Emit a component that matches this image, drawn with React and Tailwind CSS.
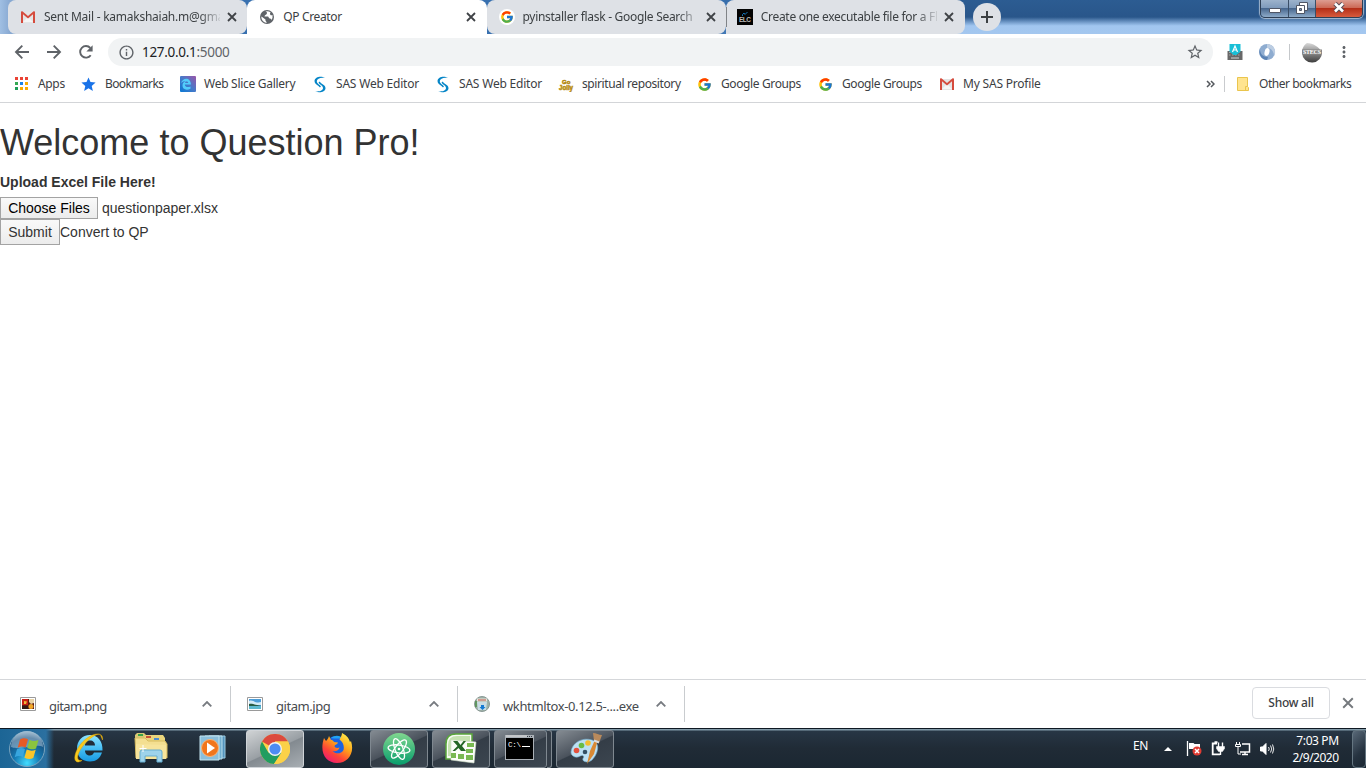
import React from "react";
import { FcGoogle } from "react-icons/fc";
import {
  MdInfoOutline,
  MdStarBorder,
  MdStar,
  MdMoreVert,
} from "react-icons/md";

const Back = ({ className = "" }) => (
  <svg width="20" height="20" viewBox="0 0 20 20" fill="none" stroke="#5f6368" strokeWidth="1.900" className={className}>
    <path d="M17 10H4.500M10.300 3.700L4 10l6.300 6.300" />
  </svg>
);

const Reload = () => (
  <svg width="20" height="20" viewBox="0 0 20 20" className="ml-3">
    <path d="M14.700 13.200A5.800 5.800 0 1 1 14.300 6" fill="none" stroke="#5f6368" strokeWidth="1.900" />
    <path d="M16.600 3.200v6.200h-6.200z" fill="#5f6368" />
  </svg>
);

const Gmail = () => (
  <svg width="16" height="16" viewBox="0 0 16 16">
    <path d="M2 3h12v11H2z" fill="#e4e4e4" />
    <path d="M3 13l5-5 5 5z" fill="#f5f5f5" />
    <path d="M1 3.200C1 2.400 2 2 2.700 2.600L8 7l5.300-4.400C14 2 15 2.400 15 3.200V14h-2V5.300L8 9.500 3 5.300V14H1z" fill="#d54b3d" />
  </svg>
);

const Globe = () => (
  <svg width="16" height="16" viewBox="0 0 16 16">
    <circle cx="8" cy="8" r="7" fill="#5f6368" />
    <path d="M6.500 2.500C8 3 8.500 4 7.500 5.200 6.500 6 5.500 6 5.500 7.500H9c1 .5.500 2 2 2 1.200 0 1.500 1 1 2a5.700 5.700 0 0 0 1.500-5.500c-1.500.8-2.500 0-2.500-1.200 0-.8.500-1 .5-1.500A6 6 0 0 0 6.500 2.500z" fill="#fff" />
    <path d="M2.500 7.500l4 3v1.200l1 1.300v1A6 6 0 0 1 2.300 8z" fill="#fff" />
  </svg>
);

const Close = ({ size = 10, color = "#3f4246", w = 1.8 }) => (
  <svg width={size} height={size} viewBox="0 0 10 10" className="shrink-0">
    <path d="M1 1l8 8M9 1L1 9" stroke={color} strokeWidth={w} />
  </svg>
);

const Elc = () => (
  <svg width="16" height="16" viewBox="0 0 16 16">
    <path d="M0 0h16v16H0z" fill="#030303" />
    <path d="M5.500 7V5.500L7 4l1 1.500L10.500 3" stroke="#1573b4" fill="none" />
    <text x="2" y="13" fontSize="6.500" fontWeight="bold" fill="#bcbcbc" fontFamily="Liberation Sans, sans-serif" textLength="12">ELC</text>
  </svg>
);

const Apps = () => (
  <svg width="14" height="14" viewBox="0 0 14 14">
    {["#ea4335", "#ea4335", "#ea4335", "#34a853", "#1a83e8", "#f9ab00", "#1e9d57", "#f9ab00", "#f9ab00"].map((c, i) => (
      <rect key={i} x={1 + (i % 3) * 5} y={Math.floor(i / 3) * 5} width="3" height="3" fill={c} />
    ))}
  </svg>
);

const EdgeE = () => (
  <svg width="16" height="16" viewBox="0 0 16 16">
    <defs>
      <linearGradient id="edge" x1="0" y1="1" x2="1" y2="0">
        <stop offset="0" stopColor="#0878d4" />
        <stop offset=".5" stopColor="#477ac9" />
        <stop offset="1" stopColor="#9a55a8" />
      </linearGradient>
    </defs>
    <rect width="16" height="16" rx="1" fill="url(#edge)" />
    <path d="M1 7C2.500 1.500 10.500.5 11 8.500H4.800c.3 3 3.700 3 5.700 2v2.200C6 15 2.200 13 2.500 9 2.700 6.500 5 5 7 5 4.500 4.600 2.500 5.500 1 7zM5 7h3.200C8.200 5 5.500 5 5 7z" fill="#53cdfb" />
  </svg>
);

const Sas = () => (
  <svg width="16" height="17" viewBox="0 0 16 17" fill="#0585c7">
    <path d="M13 2C9.500-.3 3 .5 2.500 5c0 2.800 2.300 3.800 4 5l1.500 1.500 1-1.200C7.500 8.500 4.800 7.500 4.800 5 5 2.500 9 1 13 2z" />
    <path d="M3 15.200c3.500 2 10.300 1.300 10.500-3 0-2.800-2.500-3.700-4.300-5L7.500 5.500l-1 1.200c1.500 2 4.500 2.800 4.500 5.300 0 2.600-4 4-8 3.200z" />
  </svg>
);

const Jolly = () => (
  <svg width="16" height="16" viewBox="0 0 16 16" fontFamily="Liberation Sans, sans-serif" fontWeight="bold" fill="#d9a916" stroke="#b38a1c" strokeWidth=".6">
    <text x="4" y="8" fontSize="6">Go</text>
    <text x="1" y="13.500" fontSize="6.500" textLength="14" lengthAdjust="spacingAndGlyphs">Jolly</text>
  </svg>
);

const Folder = () => (
  <svg width="14" height="16" viewBox="0 0 14 16">
    <path d="M1.500 1.500h10v9l1 1v3h-11z" fill="#ffe48f" stroke="#eac54d" />
    <path d="M9.500 14v-3.500h2" fill="none" stroke="#eac54d" />
  </svg>
);

const InputTool = () => (
  <svg width="18" height="18" viewBox="0 0 18 18">
    <path d="M1.500 8h15v9h-15z" fill="#686868" />
    <path d="M3 9.500h12M3 12h12" stroke="#a5a5a5" strokeDasharray="1.500 1.500" />
    <path d="M5 15h8" stroke="#d5d5d5" />
    <path d="M3.500 1h11v7.500L10.500 12h-3l-4-3.500z" fill="#19bfd7" />
    <path d="M6.500 9L9 3l2.500 6M7.500 7h3" stroke="#fff" fill="none" strokeWidth="1.200" />
  </svg>
);

const Swirl = () => (
  <svg width="18" height="18" viewBox="0 0 18 18">
    <circle cx="9" cy="9" r="8" fill="#8eacd0" />
    <path d="M9 1a8 8 0 0 1 7 12C16 8 13 5 9 5z" fill="#bccde2" />
    <path d="M2 6c0 5 3 8 8 8l-1 3A8 8 0 0 1 2 6z" fill="#5b83b4" />
    <ellipse cx="9" cy="9" rx="2.400" ry="4" fill="#fff" transform="rotate(15 9 9)" />
  </svg>
);

const Avatar = () => (
  <svg width="22" height="22" viewBox="0 0 22 22">
    <defs>
      <linearGradient id="ava" x1="0" y1="0" x2="0" y2="1">
        <stop offset="0" stopColor="#d8d8d8" />
        <stop offset=".5" stopColor="#8a8a8a" />
        <stop offset="1" stopColor="#3d3d3d" />
      </linearGradient>
    </defs>
    <path d="M6 2c6 0 12 4 15 9a10 10 0 0 1-20 1C1 7 3 4 6 2z" fill="url(#ava)" />
    <path d="M1 8.500h20v5H1z" fill="#858585" />
    <text x="2" y="13" fontSize="6" fontWeight="bold" fill="#fff" textLength="18" fontFamily="Liberation Serif, serif">STECS</text>
  </svg>
);

const tabs = [
  { icon: <Gmail />, text: "Sent Mail - kamakshaiah.m@gmail.com", track: "tracking-[-0.25px]" },
  { icon: <Globe />, text: "QP Creator", active: true, track: "tracking-[-0.35px]" },
  {
    icon: (
      <span className="flex h-4 w-4 items-center justify-center rounded-full bg-white">
        <FcGoogle size={14} />
      </span>
    ),
    text: "pyinstaller flask - Google Search",
    track: "tracking-[-0.29px]",
  },
  { icon: <Elc />, text: "Create one executable file for a Flask", track: "tracking-[-0.3px]", sep: true },
];

function Tab({ tab }) {
  const mask = tab.active ? "" : "[mask-image:linear-gradient(to_right,black_155px,transparent_179px)]";
  return (
    <div className={"relative flex h-[34px] w-[239.25px] shrink-0 items-center " + (tab.active ? "rounded-t-lg bg-white pl-3" : tab.sep ? "rounded-t-lg rounded-br-lg bg-[#dee1e6] pl-[11px]" : "rounded-lg bg-[#dee1e6] pl-3")}>
      {tab.sep && <span className="absolute left-0 top-[7px] h-5 w-px bg-[#808387]" />}
      <span className="flex w-6 shrink-0 items-center">{tab.icon}</span>
      <span className={"w-[176px] overflow-hidden whitespace-nowrap text-[12px] leading-4 text-[#3c4043] " + tab.track + " " + mask}>{tab.text}</span>
      <span className="ml-[7px] flex">
        <Close />
      </span>
    </div>
  );
}

function WindowButtons() {
  return (
    <div className="mr-[3px] flex h-[18px] overflow-hidden rounded-b-[5px] border border-t-0 border-[#2e3f55] shadow-[0_0_1px_1px_rgba(255,255,255,0.55)]">
      <div className="flex w-[28px] items-end justify-center border-r border-[#3b4f67] bg-[linear-gradient(#9db3cc,#7e9abb_48%,#48678e_50%,#8eabc9)] pb-1">
        <span className="h-[5px] w-3 rounded-[1px] border border-[#505665] bg-white" />
      </div>
      <div className="flex w-[27px] items-center justify-center border-r border-[#3b4f67] bg-[linear-gradient(#9db3cc,#7e9abb_48%,#48678e_50%,#8eabc9)] pb-0.5">
        <svg width="12" height="12" viewBox="0 0 12 12">
          <path d="M3.500.5h8v8h-8z" fill="#fff" stroke="#505665" />
          <path d="M.5 3.500h8v8h-8z" fill="#fff" stroke="#505665" />
          <path d="M3.500 6.500h2v2h-2z" fill="#7e9abb" stroke="#505665" />
        </svg>
      </div>
      <div className="flex w-[46px] items-center justify-center bg-[linear-gradient(#dd9d91,#cc6955_46%,#b42f18_50%,#d75b3d)] pb-0.5">
        <svg width="12" height="11" viewBox="0 0 12 11">
          <path d="M2 1.500l8 8M10 1.500l-8 8" stroke="#574b55" strokeWidth="4.600" />
          <path d="M2 1.500l8 8M10 1.500l-8 8" stroke="#fff" strokeWidth="2.600" />
        </svg>
      </div>
    </div>
  );
}

const bookmarks = [
  { icon: <Apps />, text: "Apps", w: "w-[67px]", t: "tracking-[-0.35px]" },
  { icon: <MdStar size={17} color="#1a73e8" className="-ml-px" />, text: "Bookmarks", w: "w-[99px]", t: "tracking-[-0.6px]" },
  { icon: <EdgeE />, text: "Web Slice Gallery", w: "w-[132px]", t: "tracking-[-0.28px]" },
  { icon: <Sas />, text: "SAS Web Editor", w: "w-[123px]", t: "tracking-[-0.2px]" },
  { icon: <Sas />, text: "SAS Web Editor", w: "w-[123px]", t: "tracking-[-0.2px]" },
  { icon: <Jolly />, text: "spiritual repository", w: "w-[139px]", t: "tracking-[-0.4px]" },
  { icon: <FcGoogle size={15} />, text: "Google Groups", w: "w-[121px]", t: "tracking-[-0.38px]" },
  { icon: <FcGoogle size={15} />, text: "Google Groups", w: "w-[121px]", t: "tracking-[-0.38px]" },
  { icon: <Gmail />, text: "My SAS Profile", w: "w-[130px]", t: "tracking-[-0.2px]" },
];

const ImgPng = () => (
  <svg width="16" height="14" viewBox="0 0 16 14">
    <path d="M.5.5h15v13H.5z" fill="#fff" stroke="#9a9a9a" />
    <path d="M2 2h12v10H2z" fill="#5c1a14" />
    <path d="M2 2h6v6H2z" fill="#c91d13" />
    <path d="M9 2h5v4l-3 1-2-2z" fill="#e8d2a4" />
    <circle cx="11" cy="9.500" r="2.500" fill="#f0a72a" />
    <path d="M2 9h6v3H2z" fill="#321817" />
    <path d="M4 4l3 .5L6 7H4z" fill="#ecb73b" />
  </svg>
);

const ImgJpg = () => (
  <svg width="16" height="14" viewBox="0 0 16 14">
    <path d="M.5.5h15v13H.5z" fill="#fff" stroke="#9a9a9a" />
    <path d="M2 2h12v10H2z" fill="#4c9ed8" />
    <path d="M2 4c4-2 6 3 12 1v3H2z" fill="#d3ebf8" />
    <path d="M2 7c3-1 6 1 12 2H2z" fill="#285c43" />
    <path d="M2 9h12v3H2z" fill="#5db9cf" />
  </svg>
);

const Installer = () => (
  <svg width="16" height="16" viewBox="0 0 16 16">
    <circle cx="8" cy="8" r="7.500" fill="#9eb2a8" stroke="#8a9995" />
    <path d="M3 2.500h10v3H3z" fill="#e7e5dc" />
    <path d="M4 4h8" stroke="#b65143" />
    <path d="M3 6h10l-1 8H4z" fill="#c8dce4" />
    <path d="M7 9h3v2h1.500l-3 3-3-3H7z" fill="#1679d2" />
    <path d="M2 5v6" stroke="#4e8d48" strokeWidth="1.500" />
  </svg>
);

const Chevron = () => (
  <svg width="10" height="6" viewBox="0 0 10 6">
    <path d="M.7 5.300L5 1l4.300 4.300" fill="none" stroke="#777b80" strokeWidth="1.800" />
  </svg>
);

function Download({ icon, text, pad, track, width }) {
  return (
    <div className={"flex h-9 items-center border-r border-[#c9cccf] " + width + " " + pad}>
      <span className="mb-px w-[29px] shrink-0">{icon}</span>
      <span className={"mt-1 flex-1 whitespace-nowrap text-[13px] leading-5 text-[#474b4f] " + track}>{text}</span>
      <span className="mr-[18px]">
        <Chevron />
      </span>
    </div>
  );
}

const StartOrb = () => (
  <svg width="38" height="38" viewBox="0 0 38 38">
    <defs>
      <radialGradient id="orb" cx=".5" cy=".9" r=".9">
        <stop offset="0" stopColor="#42dcff" />
        <stop offset=".4" stopColor="#167db6" />
        <stop offset=".8" stopColor="#174e7c" />
        <stop offset="1" stopColor="#88a8bf" />
      </radialGradient>
    </defs>
    <circle cx="19" cy="19" r="17.500" fill="url(#orb)" stroke="#79a4bf" />
    <path d="M3 17a16 16 0 0 1 32 0c-9-4-22 4-32 0z" fill="#c9dce8" opacity=".45" />
    <path d="M12 9.500c3-2 5.500-1.500 8-.3l-2.300 8.300c-3-1.400-5.200-1.200-8 .2z" fill="#e75b25" />
    <path d="M21.500 9.800c3 1.500 5.500 1.600 9 .2L28 18.500c-3 1.400-5.500 1-8.800-.4z" fill="#8bc43f" />
    <path d="M9 19.200c3-1.500 5.500-1.400 8-.3l-2.200 8c-3-1.300-5.200-1.200-8.100.3z" fill="#38a6de" />
    <path d="M18.700 19.500c3 1.400 5.800 1.600 9 .3l-2.400 8.200c-3 1.500-5.500 1.300-8.900-.2z" fill="#fac52a" />
  </svg>
);

const IE = () => (
  <svg width="32" height="32" viewBox="0 0 32 32">
    <defs>
      <linearGradient id="ie" x1="0" y1="0" x2="0" y2="1">
        <stop offset="0" stopColor="#8fe4ff" />
        <stop offset=".5" stopColor="#48c0f6" />
        <stop offset="1" stopColor="#1799e2" />
      </linearGradient>
    </defs>
    <path fillRule="evenodd" d="M17 3C9 3 4 9 4 16.500c0 8 5 13 13 13 6 0 10-3 12-9h-8c-1 2-2 3-4 3-3 0-5-2-5-5h17.500C30 9.500 25 3 17 3zM12 13.500c0-3 2-5 5-5s5 2 5 5z" fill="url(#ie)" />
    <path d="M29.500 8C31-2 16 1 7 13-.5 23 0 34 9 28.500 3 29.500 3 23 10 14 17 5 27-1 28 4z" fill="#f8c91d" stroke="#e1a608" strokeWidth=".5" />
  </svg>
);

const Explorer = () => (
  <svg width="34" height="32" viewBox="0 0 34 32">
    <path d="M1 3l2-2h7l2 2v5H1z" fill="#d9c875" />
    <path d="M10 5l2-2h17l2 3v8H10z" fill="#ead57c" />
    <path d="M4 2h5v2H4z" fill="#38a347" />
    <path d="M12 4h5v2h-5z" fill="#c95438" />
    <path d="M20 6h5v2h-5z" fill="#4f8dd0" />
    <path d="M1 6h10l3 3h17l2 3v14H2z" fill="#f4df91" stroke="#d8bc61" />
    <path d="M2 12l30 1v14H2z" fill="#f7e49c" />
    <path d="M6 30V20q0-2 2-2h18q2 0 2 2v10h-5v-6H11v6z" fill="#9ed3eb" stroke="#66add0" />
    <path d="M9 13v7M5.500 16.500h7" stroke="#fff" strokeWidth="1" />
  </svg>
);

const Player = () => (
  <svg width="28" height="28" viewBox="0 0 28 28">
    <path d="M10 2h16v22H10z" fill="#5494bd" stroke="#9acbe2" />
    <path d="M6 2h17v23H6z" fill="#72afd0" stroke="#b9deed" />
    <path d="M1 2h19v24H1z" fill="#8bbfdc" stroke="#c4e5f1" />
    <circle cx="11" cy="14" r="8.500" fill="#f1761d" stroke="#f8b579" />
    <path d="M8 8.500v11l8-5.500z" fill="#fff" />
  </svg>
);

const Chrome = () => (
  <svg width="30" height="30" viewBox="0 0 30 30">
    <circle cx="15" cy="15" r="15" fill="#fbd148" />
    <path d="M15 15L2 7.500A15 15 0 0 1 28 7.500H15z" fill="#dc4a3e" />
    <path d="M2 7.500A15 15 0 0 0 14 30l7.500-11-6.500-4L8.500 18.700z" fill="#229d60" />
    <path d="M15 7.500h13A15 15 0 0 1 14 30l7.500-11.500z" fill="#fbd148" />
    <circle cx="15" cy="15" r="7" fill="#f2f3f2" />
    <circle cx="15" cy="15" r="5.600" fill="#4d8cf3" />
  </svg>
);

const Firefox = () => (
  <svg width="32" height="32" viewBox="0 0 32 32">
    <defs>
      <linearGradient id="ff" x1=".85" y1="0" x2=".2" y2="1">
        <stop offset="0" stopColor="#fff24d" />
        <stop offset=".4" stopColor="#ffa31a" />
        <stop offset=".7" stopColor="#ff4536" />
        <stop offset="1" stopColor="#ec1679" />
      </linearGradient>
    </defs>
    <circle cx="15" cy="13.500" r="10.500" fill="#1e63e0" />
    <path d="M10 5c4-3 9-3 12 1-4-1-8 0-12-1z" fill="#21a4f4" />
    <path d="M3 5l2 3c1-1 2-2 3-5l2 4c1.500 0 2 .5 3 2l4 .5c-.5 2-3 2-3.500 3.500 0 2 3 2.500 5 1.500-.5 3-4 4.500-7 3.500 3 3.500 9 3 11-1 1-4-.5-8-4-10.500C20 4 21 2 21 0c6 3 7 6 8 9l1-1c4 12-3 22-14 22S-2 20 3 5z" fill="url(#ff)" />
  </svg>
);

const Atom = () => (
  <svg width="32" height="32" viewBox="0 0 32 32">
    <defs>
      <linearGradient id="atom" x1="0" y1="0" x2="0" y2="1">
        <stop offset="0" stopColor="#80d78f" />
        <stop offset="1" stopColor="#079d6c" />
      </linearGradient>
    </defs>
    <circle cx="16" cy="16" r="16" fill="url(#atom)" />
    <g fill="none" stroke="#fff" strokeWidth="1.300">
      <ellipse cx="16" cy="16" rx="4" ry="11" transform="rotate(-22 16 16)" />
      <ellipse cx="16" cy="16" rx="4" ry="11" transform="rotate(38 16 16)" />
      <ellipse cx="16" cy="16" rx="4" ry="11" transform="rotate(98 16 16)" />
    </g>
    <circle cx="16" cy="16" r="1.300" fill="#fff" />
  </svg>
);

const Excel = () => (
  <svg width="32" height="32" viewBox="0 0 32 32">
    <path d="M1 26V11Q1 1 11 1h16v25z" fill="#f6fbf2" stroke="#59a63b" strokeWidth="1.500" />
    <path d="M3 23V12Q3 3 12 3h13v20z" fill="#c5e2b0" />
    <path d="M6 7l25 2-2 21-23-3z" fill="#fbfdf9" stroke="#cfdec8" strokeWidth=".6" />
    <path d="M22 10h7v4h-7zM21 16h7v4h-7zM21 22h7v5h-7zM13 21h6v5h-6zM6 20h5v5H6z" fill="#79b952" />
    <path d="M8 8h4.500l3 4 3-4H21l-4 5 4 5h-5l-2.500-3-3.500 3H7.500l5-5z" fill="#246626" />
  </svg>
);

const Terminal = () => (
  <svg width="29" height="25" viewBox="0 0 29 25" className="mb-0.5 mr-[3px]">
    <path d="M0 0h29v25H0z" fill="#aab0b6" />
    <path d="M1 1h21" stroke="#ddd" />
    <path d="M22 1.500h5" stroke="#303841" strokeDasharray="1 1" />
    <path d="M1 3h27v21H1z" />
    <text x="3" y="12" fill="#fff" fontSize="7.500" fontFamily="Liberation Mono, monospace" textLength="13">C:\</text>
    <path d="M17 11.500h8" stroke="#fff" />
  </svg>
);

const Paint = () => (
  <svg width="33" height="33" viewBox="0 0 33 33">
    <path d="M2 20C3 10 14 5 23 8c9 3 6 14 0 20-5 4-12 1-8-3-2-4-4 1-9 0-3-1-4-3-4-5z" fill="#bde0f3" stroke="#76b4d3" strokeWidth=".6" />
    <circle cx="16" cy="20" r="2.300" fill="#345064" />
    <circle cx="7.500" cy="18.500" r="2.800" fill="#e3513d" />
    <circle cx="12.500" cy="13.500" r="2.800" fill="#69bc45" />
    <circle cx="19" cy="11" r="2.800" fill="#f4bd31" />
    <path d="M28.500 9L25 22l-7 10 3-13 5-11z" fill="#d98934" />
    <path d="M24 1c3 0 6 2 9 2l-3 8-5-2z" fill="#b98a5c" />
    <path d="M25 8.500l5 2" stroke="#d8dce0" strokeWidth="2" />
  </svg>
);

function TaskButton({ children, active, w = "w-[58px]" }) {
  return (
    <div className={"flex h-[38px] shrink-0 items-center justify-center rounded-[3px] border " + w + " " + (active ? "border-[#d0d4d8] bg-[linear-gradient(155deg,#d0d3d5,#999fa4_50%,#838a90_52%,#a8aeb3)]" : "border-[#7f8890] bg-[linear-gradient(155deg,#848b92,#4a525c_48%,#343d47_50%,#3c4650)]")}>
      {children}
    </div>
  );
}

function Taskbar() {
  return (
    <footer className="flex h-10 shrink-0 border-t border-[#0e1822] bg-[linear-gradient(#829ba9_0px,#829ba9_1px,#273645_2px,#202b36_50%,#1b2732)] text-white">
      <div className="flex h-full w-[54px] shrink-0 items-center bg-[linear-gradient(90deg,#1c6595,#2b70a0_85%,transparent)] pl-2">
        <StartOrb />
      </div>
      <div className="flex h-full w-[192px] shrink-0 items-center pb-px pl-[19px]">
        <IE />
        <span className="ml-[29px]"><Explorer /></span>
        <span className="ml-[31px]"><Player /></span>
      </div>
      <div className="flex items-center">
        <TaskButton active><Chrome /></TaskButton>
        <span className="flex w-[66px] justify-center"><Firefox /></span>
        <TaskButton><Atom /></TaskButton>
        <span className="w-1" />
        <TaskButton><Excel /></TaskButton>
        <span className="w-1" />
        <TaskButton w="w-[53px]"><Terminal /></TaskButton>
        <span className="h-[38px] w-[5px] rounded-r-[3px] border border-l-0 border-[#7f8890] bg-[#343d47]" />
        <span className="w-1" />
        <TaskButton><Paint /></TaskButton>
      </div>
      <div className="ml-auto flex items-center">
        <span className="mb-1.5 w-[31px] text-[12px] tracking-[-0.4px]">EN</span>
        <svg width="8" height="4" viewBox="0 0 8 4" className="mr-[14px]"><path d="M4 0l4 4H0z" fill="#fff" /></svg>
        <svg width="17" height="17" viewBox="0 0 17 17" className="mr-[7px]">
          <path d="M1.500 1v15" stroke="#fff" strokeWidth="1.300" />
          <path d="M3 3h4.500l1 1H14v6H8L7 9H3z" fill="#fff" />
          <circle cx="11" cy="11" r="4.500" fill="#e03b32" />
          <path d="M9 9l4 4M13 9l-4 4" stroke="#fff" strokeWidth="1.500" />
        </svg>
        <svg width="16" height="17" viewBox="0 0 16 17" fill="none" stroke="#fff" strokeWidth="1.400" className="mr-2">
          <path d="M7 3.500H2.700V14.300H10M4.500 2.200h3" strokeWidth="1.800" />
          <path d="M8.500 2.500V7M12.500 2.500V7M10.500 11v4" />
          <path d="M6.500 6.500h8v2l-2 3h-4l-2-3z" fill="#fff" strokeWidth=".5" />
        </svg>
        <svg width="17" height="17" viewBox="0 0 17 17" fill="none" stroke="#fff" className="mr-2">
          <path d="M2.500 2v3M5.500 2v3M1.500 4.500h5v2h-5zM4 7v7h3" />
          <path d="M8 4h7.500v8H6" strokeWidth="1.500" />
          <path d="M11 12v2M8 14.500h6" strokeWidth="1.500" />
        </svg>
        <svg width="16" height="16" viewBox="0 0 16 16" fill="none" stroke="#fff" className="mr-[19px]">
          <path d="M1.500 6h2L7 2.500v11L3.500 10h-2z" fill="#fff" />
          <path d="M9.500 6q1.500 2 0 4M11.500 4.500q2.500 3.500 0 7M13.500 3.500q2.500 4.500 0 9" strokeWidth=".9" />
        </svg>
        <div className="mr-[11px] w-[47px] whitespace-nowrap text-center text-[12px] leading-[17px]">
          <div className="tracking-[-0.4px]">7:03 PM</div>
          <div className="-ml-1 tracking-[-0.5px]">2/9/2020</div>
        </div>
        <span className="h-[38px] w-[14px] rounded-sm border border-[#657681] bg-[linear-gradient(135deg,#596978,#263340_60%,#1a2631)]" />
      </div>
    </footer>
  );
}

export default function App() {
  return (
    <div className="flex h-[768px] w-[1366px] flex-col overflow-hidden bg-white font-['Noto_Sans',sans-serif]">
      <header className="flex h-[34px] shrink-0 bg-[linear-gradient(90deg,#a0bfe3_0px,#88a9d2_10px,#3870af_220px,#3870af_700px,transparent_960px),linear-gradient(#2c5c92,#29568a_50%,#7ea6d4_68%,#a1c6f0_76%,#a4c7ef)] pl-2">
        {tabs.map((t) => <Tab key={t.text} tab={t} />)}
        <button className="ml-2 mt-[3px] flex h-7 w-7 items-center justify-center rounded-full bg-[#dee1e6]">
          <svg width="12" height="12" viewBox="0 0 12 12"><path d="M6 0v12M0 6h12" stroke="#3c4043" strokeWidth="2" /></svg>
        </button>
        <div className="ml-auto"><WindowButtons /></div>
      </header>

      <nav className="flex h-9 shrink-0 items-center pl-[12px] text-[#5f6368]">
        <Back />
        <Back className="ml-3 rotate-180" />
        <Reload />
        <div className="ml-3 flex h-7 w-[1105px] items-center rounded-full bg-[#f1f3f4] pl-2.5 pr-[9px]">
          <MdInfoOutline size={17} />
          <span className="ml-[7px] text-[13.500px] leading-5 tracking-[-0.3px]"><span className="text-[#202124]">127.0.0.1</span>:5000</span>
          <MdStarBorder size={18} className="ml-auto" />
        </div>
        <span className="ml-[13px]"><InputTool /></span>
        <span className="ml-[14px]"><Swirl /></span>
        <span className="ml-[13px] h-4 w-px bg-[#c5c8cb]" />
        <span className="ml-[11px]"><Avatar /></span>
        <MdMoreVert size={18} className="ml-3" />
      </nav>

      <div className="flex h-[33px] shrink-0 items-center border-b border-[#d3d5d8] pb-[4px] pl-[14px] text-[12px] text-[#3c4043]">
        {bookmarks.map((b, i) => (
          <div key={i} className={"flex shrink-0 items-center whitespace-nowrap " + b.w}>
            <span className="flex w-6 shrink-0 items-center">{b.icon}</span>
            <span className={b.t}>{b.text}</span>
          </div>
        ))}
        <svg width="9" height="8" viewBox="0 0 9 8" className="ml-auto"><path d="M1 1l3 3-3 3M5 1l3 3-3 3" fill="none" stroke="#54585d" strokeWidth="1.500" /></svg>
        <span className="ml-[9px] h-4 w-px bg-[#c9cbce]" />
        <span className="ml-[11px]"><Folder /></span>
        <span className="ml-[9px] mr-[14px] w-[93px] whitespace-nowrap tracking-[-0.47px]">Other bookmarks</span>
      </div>

      <main className="flex-1 bg-white font-['Liberation_Sans',Arial,sans-serif] text-[14px] leading-5 text-[#333]">
        <h1 className="pt-5 text-[36px] font-normal leading-[39.600px]">Welcome to Question Pro!</h1>
        <div className="mt-[9px] font-bold">Upload Excel File Here!</div>
        <div className="mt-[5px] flex h-[22px] items-center">
          <button className="h-[22px] w-[98px] border border-[#a3a3a3] bg-gradient-to-b from-[#f9f9f9] to-[#ececec] leading-5 text-black">Choose Files</button>
          <span className="ml-1">questionpaper.xlsx</span>
        </div>
        <div className="flex h-[26px] items-center">
          <button className="h-[26px] w-[60px] border border-[#a3a3a3] bg-gradient-to-b from-[#f9f9f9] to-[#ececec]">Submit</button>
          <span>Convert to QP</span>
        </div>
      </main>

      <section className="flex h-[49px] shrink-0 items-center border-t border-[#d5d7da] bg-white">
        <Download icon={<ImgPng />} text="gitam.png" width="w-[231px]" pad="pl-5" track="tracking-[-0.6px]" />
        <Download icon={<ImgJpg />} text="gitam.jpg" width="w-[227px]" pad="pl-4" track="tracking-[-0.45px]" />
        <Download icon={<Installer />} text="wkhtmltox-0.12.5-....exe" width="w-[227px]" pad="pl-4" track="tracking-[-0.37px]" />
        <button className="mb-0.5 ml-auto h-8 w-[78px] rounded border border-[#dadce0] text-[12px] font-medium tracking-[-0.25px] text-[#3c4043]">Show all</button>
        <span className="mb-0.5 ml-3 mr-3"><Close size={12} color="#75797d" w={1.6} /></span>
      </section>
      <Taskbar />
    </div>
  );
}
